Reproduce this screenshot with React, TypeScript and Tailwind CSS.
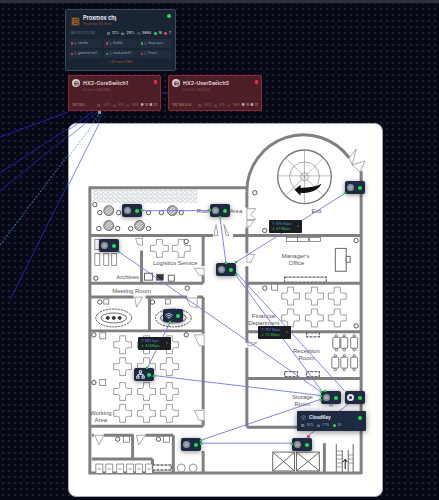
import { Network, Wifi, Server, HardDrive, Cpu, MemoryStick, Clock, Box, Monitor } from "lucide-react";

// page coordinates: floor plan svg uses the same numbers as the page
const workstations = [
  [159, 248], [181, 248],
  [122, 345], [146, 345], [169, 345],
  [122, 367], [146, 367], [169, 367],
  [122, 392], [146, 392], [169, 392],
  [122, 414], [146, 414], [169, 414],
  [291, 296], [315, 296], [338, 296],
  [291, 318], [315, 318], [338, 318],
];

const walls = [
  "M88 187H247", "M89 186V475", "M88 474H362",
  "M90 235H213", "M233 235H362", "M247 283H362", "M247 332H362", "M247 379H362", "M247 428H362",
  "M362 170V475",
  "M247 191V207", "M247 227V253", "M247 266V343", "M247 348V428",
  "M141 250V283", "M90 283H203", "M203 235V266", "M203 275V283",
  "M90 297H133", "M145 297H187", "M197 297H203", "M149 297V331", "M90 331H203",
  "M203 297V334", "M203 346V410", "M203 421V427", "M90 427H203",
  "M91 436H93", "M103 436H133", "M145 436H173", "M132 436V460", "M91 460H152", "M152 460V474",
  "M173 436V474", "M203 452V474", "M325 444V475",
];

const stations = [
  [108, 210], [172, 210], [108, 225], [139, 225],
];

const smallRings = [
  [94, 204], [99, 212], [118, 212], [148, 212], [161, 212], [181, 212],
  [98, 228], [117, 228], [130, 228], [148, 228], [95, 278], [186, 241], [187, 288],
  [255, 192], [265, 230], [357, 240], [265, 288], [357, 326], [93, 335], [186, 335],
  [93, 383], [99, 302], [152, 302], [117, 440], [158, 440],
];

const chairs = [
  [337, 343], [345, 343], [355, 343], [336, 363], [345, 363], [355, 363],
];

const labels: [string, number, number][] = [
  ["Roof", 203, 212],
  ["Area", 236, 212],
  ["Archives", 127, 279],
  ["Logistics Service", 175, 265],
  ["Meeting Room", 131, 293],
  ["Manager's", 296, 258],
  ["Office", 297, 265],
  ["Exit", 317, 212],
  ["Financial", 264, 318],
  ["Department", 264, 325],
  ["Reception", 307, 353],
  ["Room", 307, 360],
  ["Storage", 303, 400],
  ["Room", 303, 407],
  ["Working", 100, 416],
  ["Area", 100, 423],
];

// line pairs: x1 y1 x2 y2
const links = [
  [0, 137, 68, 112], [0, 173, 93, 112], [0, 191, 97, 112], [10, 300, 103, 113],
  [142, 210, 210, 210], [220, 217, 226, 263], [236, 262, 345, 193],
  [119, 252, 321, 392], [236, 275, 322, 391], [236, 272, 345, 391],
  [170, 322, 147, 368], [154, 376, 321, 396], [201, 441, 321, 400], [201, 444, 292, 444],
  [307, 438, 350, 404],
];

const handles = [
  [142, 210], [210, 210], [220, 217], [226, 263], [236, 262], [345, 193], [119, 252],
  [170, 322], [147, 368], [154, 376], [201, 441], [201, 444], [292, 444],
  [321, 392], [325, 391], [321, 396], [321, 400], [236, 275],
];

function Links({ color }: { color: string }) {
  return (
    <>
      {links.map(([x1, y1, x2, y2], i) => (
        <line key={i} x1={x1} y1={y1} x2={x2} y2={y2} stroke={color} strokeWidth="0.9" />
      ))}
    </>
  );
}

function FloorPlan() {
  return (
    <svg viewBox="68 123 315 374" className="block w-full h-full">
      <defs>
        <pattern id="gravel" width="5" height="4" patternUnits="userSpaceOnUse">
          <path d="M0 1L2 2M3 0L4 2M1 3L3 4M4 3L5 2" stroke="#7d93a3" strokeWidth="0.6" />
        </pattern>
        <path
          id="desk"
          d="M-3-9H3V-5Q3-3 5-3H9V3H5Q3 3 3 5V9H-3V5Q-3 3-5 3H-9V-3H-5Q-3-3-3-5Z"
          fill="#fff"
          stroke="#777"
          strokeWidth="0.7"
        />
      </defs>

      <rect x="92" y="189" width="105" height="13" fill="url(#gravel)" />

      {/* walls */}
      <g stroke="#808080" strokeWidth="3" fill="none">
        {walls.map((d) => (
          <path key={d} d={d} />
        ))}
        <path d="M247 191A57 57 0 0 1 350 157" />
      </g>

      {/* revolving door */}
      <g fill="none" stroke="#777">
        <circle cx="305" cy="176" r="27" strokeWidth="1.4" />
        <circle cx="305" cy="176" r="15" strokeWidth="0.6" />
        <circle cx="305" cy="176" r="4" strokeWidth="0.6" />
        <path d="M278 175H332M305 149V203M286 157L324 195M324 157L286 195" strokeWidth="0.5" />
      </g>
      <path d="M295 189L301 184L301 187C309 187 317 186 322 183C319 190 310 193 301 192L301 195Z" fill="#111" />

      {/* doors */}
      <g fill="#fff" stroke="#888" strokeWidth="0.7">
        <path d="M350 157L357 148L353 164ZM353 164L366 160L361 171Z" />
        <path d="M247 208H256L251 214L256 219H247ZM247 220H254L250 226H247Z" />
        <path d="M247 254H255L251 262H247Z" />
        <path d="M248 343H257L252 346H248Z" />
        <path d="M216 224L218 235H214ZM224 224L229 235H226Z" />
        <path d="M135 238H142V245L137 244Z" />
        <path d="M194 268H204V275H199Z" />
        <path d="M134 297H142L136 307Z" />
        <path d="M186 298H197V308L190 306Z" />
        <path d="M194 335H204V346H199Z" />
        <path d="M194 411H204V421H199Z" />
        <path d="M94 436H103L98 446Z" />
        <path d="M136 436H145L138 446Z" />
      </g>

      {/* desks */}
      {workstations.map(([x, y]) => (
        <use key={`${x}-${y}`} href="#desk" x={x} y={y} />
      ))}

      {/* round tables */}
      <g fill="none" stroke="#555">
        {stations.map(([x, y]) => (
          <g key={`${x}-${y}`}>
            <circle cx={x} cy={y} r="5" strokeWidth="0.8" fill="#aaa" />
            <path d={`M${x - 3} ${y + 3}L${x + 3} ${y - 3}M${x - 4} ${y + 1}L${x + 1} ${y - 4}M${x - 1} ${y + 4}L${x + 4} ${y - 1}`} stroke="#fff" strokeWidth="0.8" />
          </g>
        ))}
        {smallRings.map(([x, y]) => (
          <circle key={`${x}-${y}`} cx={x} cy={y} r="2.2" stroke="#333" strokeWidth="0.8" fill="#fff" />
        ))}
      </g>

      {/* conference tables */}
      {[113, 173].map((x) => (
        <g key={x} fill="none" stroke="#333">
          <ellipse cx={x} cy="318" rx="18" ry="9" strokeWidth="0.9" strokeDasharray="2 1" />
          <ellipse cx={x} cy="318" rx="13" ry="5" strokeWidth="0.7" />
          <circle cx={x - 6} cy="318" r="1.5" fill="#333" />
          <circle cx={x} cy="318" r="1.5" fill="#333" />
          <circle cx={x + 6} cy="318" r="1.5" fill="#333" />
        </g>
      ))}

      {/* cabinets and small furniture */}
      <g fill="#fff" stroke="#666" strokeWidth="0.7">
        <rect x="94" y="239" width="5" height="10" />
        <rect x="94" y="253" width="5" height="12" />
        <rect x="103" y="253" width="5" height="12" />
        <rect x="111" y="253" width="5" height="12" />
        <rect x="287" y="237" width="11" height="4" />
        <rect x="298" y="237" width="11" height="4" />
        <rect x="310" y="237" width="11" height="4" />
        <rect x="285" y="277" width="42" height="5" strokeDasharray="3 1" strokeWidth="1.2" />
        <rect x="336" y="248" width="11" height="23" strokeWidth="1" />
        <rect x="347" y="256" width="4" height="6" strokeWidth="1" />
        <rect x="285" y="372" width="13" height="5" strokeDasharray="3 1" strokeWidth="1.2" />
        <rect x="307" y="372" width="13" height="5" strokeDasharray="3 1" strokeWidth="1.2" />
        <rect x="307" y="333" width="13" height="4" strokeDasharray="3 1" strokeWidth="1.2" />
        <rect x="144" y="273" width="8" height="7" strokeWidth="1" />
        <rect x="156" y="274" width="7" height="6" fill="#333" />
        <rect x="168" y="275" width="6" height="6" strokeWidth="1" />
        <rect x="272" y="284" width="6" height="6" />
        <rect x="103" y="299" width="5" height="5" />
        <rect x="165" y="299" width="5" height="5" />
        <rect x="99" y="333" width="6" height="6" />
        <rect x="99" y="380" width="6" height="6" />
        <rect x="123" y="437" width="6" height="6" />
        <rect x="163" y="437" width="6" height="6" />
      </g>

      {/* reception chairs */}
      {chairs.map(([x, y]) => (
        <g key={`${x}-${y}`} fill="#fff" stroke="#444" strokeWidth="0.7">
          <circle cx={x} cy={y - 7} r="1.2" />
          <circle cx={x} cy={y + 7} r="1.2" />
          <rect x={x - 3.5} y={y - 5.5} width="7" height="11" rx="1.2" />
        </g>
      ))}

      {/* washroom cubicles */}
      <g fill="#fff" stroke="#666" strokeWidth="0.7">
        {[95, 105, 116, 126, 135, 145].map((x) => (
          <path key={x} d={`M${x} 474V465H${x + 7}V474M${x + 2} 470H${x + 5}`} />
        ))}
        <rect x="152" y="466" width="19" height="5" strokeDasharray="3 1" strokeWidth="1.4" />
        <circle cx="181" cy="469" r="4" />
        <circle cx="193" cy="469" r="4" />
      </g>

      {/* elevators and stairs */}
      <g fill="none" stroke="#666" strokeWidth="1">
        <path d="M273 453H295V472H273ZM273 453L295 472M295 453L273 472" />
        <path d="M297 453H320V472H297ZM297 453L320 472M320 453L297 472" />
        <path d="M337 445V473M354 445V473M343 451V473M349 451V473" />
        <path d="M337 452H343M337 456H343M337 460H343M337 464H343M337 468H343M349 456H354M349 460H354M349 464H354" strokeWidth="0.6" />
        <path d="M346 470V461M344 463L346 460L348 463" stroke="#111" />
      </g>

      {labels.map(([t, x, y]) => (
        <text key={`${t}-${x}`} x={x} y={y} textAnchor="middle" fontSize="6" fill="#555" fontFamily="'Liberation Sans', sans-serif">
          {t}
        </text>
      ))}

      <Links color="#7474f2" />
      <line x1="0" y1="245" x2="100" y2="113" stroke="#6aa6e2" strokeWidth="0.9" strokeDasharray="2 1.5" />
    </svg>
  );
}

function Node({ x, y, kind = "ring" }: { x: number; y: number; kind?: "ring" | "wifi" | "net" | "uni" }) {
  return (
    <div
      className="absolute flex h-[13px] w-[20px] items-center justify-between rounded-[2px] bg-[#1d2a42] pl-[2px] pr-[3px] shadow-[0_1px_5px_rgba(0,0,0,0.45)]"
      style={{ left: x, top: y }}
    >
      {kind === "ring" && <span className="size-[7px] rounded-full border-2 border-[#8b929c] bg-[#aab0b8]" />}
      {kind === "wifi" && <Wifi className="size-[8px] text-[#c4c9d0]" strokeWidth={3} />}
      {kind === "net" && <Network className="size-[9px] text-[#d4d8de]" strokeWidth={3} />}
      {kind === "uni" && (
        <span className="flex size-[7px] items-center justify-center rounded-full bg-[#e4e6ea]">
          <span className="size-[3px] rounded-full bg-[#1d2a42]" />
        </span>
      )}
      <span className="size-[4px] rounded-full bg-[#22e04f]" />
    </div>
  );
}

function Bandwidth({ x, y, up, down }: { x: number; y: number; up: string; down: string }) {
  return (
    <div
      className="absolute flex h-[13px] w-[33px] items-center justify-between rounded-[1px] bg-[#1c1f22] px-[3px] text-[3.5px] leading-[4.5px]"
      style={{ left: x, top: y }}
    >
      <div>
        <div className="text-[#4c8fe8]">↑ {up}</div>
        <div className="text-[#36c45c]">↓ {down}</div>
      </div>
      <span className="text-[5px] text-[#8a8f96]">›</span>
    </div>
  );
}

const vms = [
  ["ventila", "#c8434a"],
  ["Bubbit", "#c8434a"],
  ["deya-pos...", "#22b852"],
  ["gameserver1", "#c8434a"],
  ["omd-prank1", "#22b852"],
  ["Frusin", "#c8434a"],
];

function ProxmoxCard() {
  return (
    <div className="absolute left-[65px] top-[9px] flex h-[62px] w-[111px] flex-col rounded-[2px] border border-[#3c4a5e] bg-[#1a2434] px-[3px] pt-[5px] text-[#8f98a6] shadow-[0_0_4px_rgba(0,0,0,0.5)]">
      <div className="flex items-start justify-between pl-[2px] pr-[1px]">
        <div className="flex items-center gap-[3px]">
          <span className="flex size-[9px] items-center justify-center rounded-[1px] bg-[#4a3524]">
            <Server className="size-[7px] text-[#c97a2b]" strokeWidth={2.5} />
          </span>
          <div>
            <div className="text-[5.5px] font-bold leading-[7px] text-[#e6e9ee]">Proxmox ch)</div>
            <div className="text-[3.5px] leading-[5px] text-[#9a5a28]">Proxmox VE Host</div>
          </div>
        </div>
        <span className="mt-[-1px] size-[4px] rounded-full bg-[#22e04f]" />
      </div>
      <div className="mt-[4px] flex items-center justify-between pl-[1px] pr-[1px] text-[3.5px] leading-[5px]">
        <span className="text-[#737c88]">185.121.172.250</span>
        <div className="flex items-center gap-[1.5px] font-bold text-[#a9b0ba]">
          <Cpu className="size-[3.5px]" /> 12%
          <MemoryStick className="ml-[1px] size-[3.5px]" /> 29%
          <Clock className="ml-[1px] size-[3.5px]" /> 5664
          <span className="ml-[1px] size-[3px] rounded-full bg-[#22e04f]" /> 16
          <span className="ml-[1px] size-[3px] rounded-full bg-[#f0484e]" /> 7
        </div>
      </div>
      <div className="mt-[3px] grid grid-cols-3 gap-[2px]">
        {vms.map(([name, color]) => (
          <div key={name} className="flex h-[8.5px] items-center gap-[1px] rounded-[1px] bg-[#212c3e] px-[1.5px] text-[3.2px] text-[#9aa2ae]">
            <span className="size-[2.5px] shrink-0 rounded-full" style={{ backgroundColor: color }} />
            <Monitor className="size-[3px] shrink-0 text-[#6f7884]" />
            <span className="whitespace-nowrap">{name}</span>
          </div>
        ))}
      </div>
      <div className="mt-[2px] text-center text-[3.5px] leading-[5px] text-[#9a5a28]">+10 more VMs</div>
    </div>
  );
}

function SwitchCard({ x, w, title, sub, ip }: { x: number; w: number; title: string; sub: string; ip: string }) {
  return (
    <div
      className="absolute top-[75px] flex h-[36px] flex-col rounded-[2px] border border-[#8e2634] bg-[#4e1e27] px-[3px] pt-[3px] text-[#8a6468]"
      style={{ left: x, width: w }}
    >
      <div className="flex items-start justify-between">
        <div className="flex items-center gap-[3px]">
          <span className="flex size-[8px] items-center justify-center rounded-full bg-[#d8cccc]">
            <HardDrive className="size-[5px] text-[#4e1e27]" strokeWidth={3} />
          </span>
          <span className="text-[5.2px] font-bold leading-[8px] text-[#dccccd]">{title}</span>
        </div>
        <span className="mt-[1px] size-[3.5px] rounded-[1px] bg-[#e23040]" />
      </div>
      <div className="mt-[1px] pl-[11px] text-[3.5px] leading-[5px] text-[#84565e]">{sub}</div>
      <div className="mb-[2px] mt-auto flex items-center justify-between text-[3.5px] leading-[5px]">
        <span className="text-[#a98e90]">{ip}</span>
        <div className="flex items-center gap-[2px]">
          <Cpu className="size-[3.5px]" /> 34%
          <MemoryStick className="size-[3.5px]" /> 9%
          <Box className="size-[3.5px]" /> 18W
          <span className="text-[#bfa8aa]">● 18 ● 21</span>
        </div>
      </div>
    </div>
  );
}

function CloudKey() {
  return (
    <div className="absolute left-[297px] top-[411px] flex h-[20px] w-[69px] flex-col rounded-[1px] bg-[#1d2a42] px-[4px] pt-[3px] text-[#a6aebb] shadow-[0_1px_6px_rgba(0,0,0,0.5)]">
      <div className="flex items-center justify-between">
        <div className="flex items-center gap-[3px]">
          <Box className="size-[5px] text-[#8a929e]" />
          <span className="text-[4.6px] font-bold leading-[7px] text-[#e8ebf0]">CloudKey</span>
        </div>
        <span className="size-[4px] rounded-full bg-[#22e04f]" />
      </div>
      <div className="mt-[2px] flex items-center gap-[2px] text-[3.5px] leading-[5px]">
        <Cpu className="size-[3.5px]" /> 10%
        <MemoryStick className="ml-[1px] size-[3.5px]" /> 77%
        <span className="ml-[1px] size-[3px] rounded-full bg-[#22e04f]" /> 10
      </div>
    </div>
  );
}

export default function App() {
  return (
    <main className="relative h-[500px] w-[439px] overflow-hidden bg-[#070916] bg-[radial-gradient(circle,#1d2236_0.8px,transparent_1px)] bg-[size:6px_6px] font-['Inter',sans-serif]">
      <div className="h-[3px] bg-[#2c303b]" />

      {/* edges on the dark canvas */}
      <svg viewBox="0 0 439 500" className="pointer-events-none absolute inset-0 h-full w-full">
        <Links color="#2424b4" />
        <line x1="0" y1="245" x2="100" y2="113" stroke="#4d8ccc" strokeWidth="0.9" strokeDasharray="2 1.5" />
        <line x1="161" y1="93" x2="205" y2="93" stroke="#3a2fa8" strokeWidth="0.8" />
      </svg>

      <div className="absolute left-[68px] top-[123px] h-[374px] w-[315px] overflow-hidden rounded-[8px] border border-[#a4a9b4] bg-white">
        <FloorPlan />
      </div>

      <ProxmoxCard />
      <SwitchCard x={68} w={93} title="HX2-CoreSwitch1" sub="Critical (100.169)" ip="192.168..." />
      <SwitchCard x={168} w={94} title="HX2-UserSwitch5" sub="Critical (100.182)" ip="192.168.0.10" />
      <div className="absolute left-[98px] top-[111px] size-[3px] bg-[#8d98a4]" />

      <Node x={122} y={204} />
      <Node x={210} y={204} />
      <Node x={99} y={239} />
      <Node x={216} y={263} />
      <Node x={345} y={181} />
      <Node x={163} y={309} kind="wifi" />
      <Node x={134} y={368} kind="net" />
      <Node x={181} y={438} />
      <Node x={321} y={391} />
      <Node x={345} y={391} kind="uni" />
      <Node x={292} y={438} />

      {/* port handles on the nodes */}
      <svg viewBox="0 0 439 500" className="pointer-events-none absolute inset-0 h-full w-full">
        {handles.map(([x, y]) => (
          <circle key={`${x}-${y}`} cx={x} cy={y} r="1.3" fill="#22c94a" />
        ))}
        <rect x="307" y="435.5" width="3" height="2" fill="#e0343f" />
        <rect x="329" y="404" width="4" height="2.5" fill="#8d98a4" />
      </svg>

      <Bandwidth x={269} y={220} up="874 Kbps" down="4.1 Mbps" />
      <Bandwidth x={138} y={337} up="892 bps" down="43 Mbps" />
      <Bandwidth x={258} y={326} up="787 Kbps" down="7.3 Mbps" />

      <CloudKey />
    </main>
  );
}
